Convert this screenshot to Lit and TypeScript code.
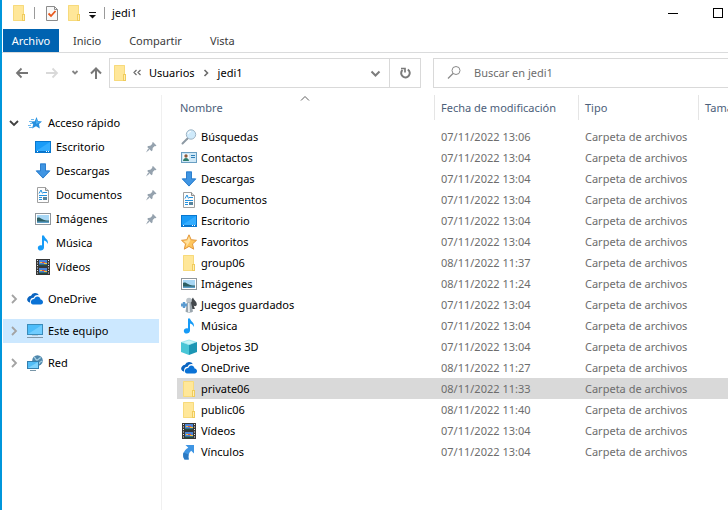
import { LitElement, html, css, svg, TemplateResult, SVGTemplateResult } from "lit";
import { customElement, property, state } from "lit/decorators.js";
import { classMap } from "lit/directives/class-map.js";

const glyphs: Record<string, SVGTemplateResult> = {
  folder: svg`<path d="M2 0h11v16H2z" fill="#ffe799"/><path d="M2.500 0.500h10v9M2.500 0.500v15h9" fill="none" stroke="#f7da7c"/><rect x="11.500" y="9.500" width="2" height="6" fill="#ffeeb5" stroke="#f0cc5c"/>`,
  search: svg`<path d="M1.500 14.500 6.500 9.500" stroke="#8d99a3" stroke-width="2" stroke-linecap="round"/><circle cx="10" cy="5.500" r="4.700" fill="#cfeafb" stroke="#9fb4c4"/><path d="M7 5a3 3 0 0 1 3-2.500" stroke="#fff" fill="none"/>`,
  contacts: svg`<rect x="0.500" y="2.500" width="15" height="10" fill="#cfe8f7" stroke="#6a9fc2"/><rect x="2" y="4" width="6" height="7" fill="#f5fafc"/><circle cx="5" cy="6" r="1.700" fill="#8b5a3c"/><path d="M2 11c0-4 6-4 6 0z" fill="#2f7d6b"/><path d="M10 5.500h4M10 7.500h4" stroke="#2e7fb8"/>`,
  download: svg`<path d="M5 0.500h6v7h4.500L8 15.500 0.500 7.500H5z" fill="#3f95e3"/><path d="M5.500 1h5v7h4L8 15 1.500 8h4z" fill="none" stroke="#2d7fcd"/>`,
  document: svg`<path d="M2.500 0.500h8l3 3v12h-11z" fill="#fdfdfd" stroke="#a0a0a0"/><path d="M10.500 0.500v3h3" fill="#ddd" stroke="#8c8c8c"/><path d="M4 6.500 6 3l1.500 3.500M8 5.500h4M4 8.500h8M4 10.500h3M4 12.500h3" stroke="#2492df" fill="none"/><rect x="8" y="10" width="4" height="3" fill="#57839c"/>`,
  desktop: svg`<rect x="0.500" y="2.500" width="15" height="11" fill="#1a9cf8" stroke="#0877cf"/><path d="M1 12 15 3v9z" fill="#34adff"/><path d="M1 12.500h14" stroke="#0a72c8"/><path d="M2 12.500h1M11 12.500h1M13 12.500h1" stroke="#fff"/>`,
  favorite: svg`<path d="M8 0.800 10.200 5.700 15.500 6.300 11.500 9.900 12.700 15.200 8 12.400 3.300 15.200 4.500 9.900 0.500 6.300 5.800 5.700z" fill="#ffc65c" stroke="#e2973d"/><path d="M8 2.500 9.300 6.400 8 9 5 13l0.700-3.500L2.500 7l3.800-.4z" fill="#ffe1a0"/>`,
  picture: svg`<rect x="0.500" y="2.500" width="15" height="11" fill="#fff" stroke="#8f969c"/><rect x="2" y="4" width="12" height="8" fill="#a8d7f5"/><path d="M2 7c2-1 3 0 5 1s4 1.500 7 1.500V11H2z" fill="#2d5f63"/><path d="M2 10.500h12V12H2z" fill="#5c9fc9"/>`,
  games: svg`<path d="M12 0.500c1 3 4 4 3.800 7-.3 2-2.300 2-3.100 1l1.200 3.500H9.500L10.500 9C8.500 9 7.500 8 8 6z" fill="#42474c"/><circle cx="8" cy="3.500" r="2.800" fill="#bcc4ca"/><path d="M6 5.500h4l2 9c-2 1.600-5.500 1.600-7.500 0z" fill="#9aa5ad"/><path d="M7 6h1.500l.5 9H7z" fill="#e6ebee"/><path d="M0 6.500h1.800V5h2.400v1.500H6v3H4.200V11H1.800V9.500H0z" fill="#5b9bd0"/>`,
  music: svg`<path d="M7 0.500h2c.3 2.700 5 4 3.700 8.500-.5-2-1.700-3-3.700-3.500v7C9 16.500 2.800 16.500 2.800 13c0-2.500 2.500-3.200 4.200-2.500z" fill="#169bf7"/>`,
  cube: svg`<path d="M0 3 8 0.500 16 3 8 6z" fill="#9ee8f0"/><path d="M0 3 8 6v10L0 13z" fill="#49c6d6"/><path d="M8 6 16 3v10L8 16z" fill="#1c96b4"/><path d="M2.500 3.200 8 1.500l5.500 1.700L8 5.200z" fill="#c5f5f8"/>`,
  cloud: svg`<path d="M2.600 11.500A3 3 0 0 1 1 6.500 3.500 3.500 0 0 1 4 4.700 4.500 4.500 0 0 1 12 4.300C9 3.500 7.300 5 6.700 6.700 4 6.500 2.500 9 3.300 11.500z" fill="#0a64c0"/><path d="M6 13.500c-3 0-3-5.500 1.300-5.500C8 4.500 13 4.500 13.600 8.500c3.200.3 3.200 5 0 5z" fill="#0a72d6"/>`,
  video: svg`<rect x="1" y="0" width="14" height="16" fill="#373737"/><path d="M2.500 1v15M13.500 1v15" stroke="#e9e9e9" stroke-dasharray="1 1.500"/><rect x="4" y="1" width="8" height="6" fill="#4d86d8"/><rect x="4" y="9" width="8" height="6" fill="#4d86d8"/><path d="M4 5.500h8V7H4zM4 13.500h8V15H4z" fill="#244f41"/><path d="M7 3h3v1H7zM7 11h3v1H7z" fill="#e34c35"/><path d="M9 4h3v1H9zM5 3h2v1H5zM9 12h3v1H9zM5 11h2v1H5z" fill="#f4c63c"/>`,
  link: svg`<path d="M4.500 1H13v8.500l-2.800-2.800C7.500 9 6.800 12 7.800 15.500H3.500C1 11 2.500 6.500 7.300 3.800z" fill="#3f95e3"/><path d="M2.400 8.500c-.7 2.500-.2 5 1.100 7h4.300c-.6-2-.6-3.500-.1-5z" fill="#2b79c2"/>`,
  quick: svg`<path d="M9.500 2 11 6 15 6.400 12 9 12.800 13.500 9 11.300 5 13.500 6.200 9.300 4 6.600 7.800 6.200z" fill="#258fdf"/><path d="M9.500 3.500 10.500 6.600 13.500 7 9 9z" fill="#55b5f3"/><path d="M4 4.500h3M2 6.500h3M3 8.500h3M1 10.500h3M2 12.500h3" stroke="#6db9ee"/>`,
  computer: svg`<rect x="0.500" y="1.500" width="15" height="10" fill="#4dbdfa" stroke="#3b8cba"/><path d="M1 11 15 2v9z" fill="#71cdff"/><path d="M5 12.500h6" stroke="#b7cbd8"/><path d="M0 14.500h16" stroke="#8298a8"/>`,
  network: svg`<circle cx="10.500" cy="5.500" r="5.300" fill="#4f87ac"/><path d="M7 2c2 1 1 3 3 3s2-3 4-2M12 9c0-2 2-2 3-3" stroke="#a5d0e4" stroke-width="1.300" fill="none"/><rect x="0.500" y="6.500" width="11" height="7" fill="#52bdf7" stroke="#347fae"/><path d="M1 13 11 7v6z" fill="#7ed2fd"/><path d="M3 15.500h6" stroke="#7996a8"/>`,
  pin: svg`<path d="M10 3 13.500 6.500 12.500 7.300 11.800 7 9.700 9 9.500 11.300 8.500 12.300 4.200 8 5.200 7 7.300 6.800 9.400 4.800 9 4zM5.200 9.500 6.500 10.800 3 13.500z" fill="#95a2ae"/>`,
  checklist: svg`<path d="M2.500 1.500h8l3 3v11h-11z" fill="#f8f8f8" stroke="#8c8c8c"/><path d="M10.500 1.500v3h3" fill="none" stroke="#8c8c8c"/><path d="m4.500 8.500 2.500 2.500 4.500-5" fill="none" stroke="#e8571c" stroke-width="1.800"/>`,
  menu: svg`<path d="M5 7.500h7" stroke="#111"/><path d="M5 10h7L8.500 13.500z" fill="#111"/>`,
  back: svg`<path d="M14 8H3M7.500 3.500 3 8l4.500 4.500" fill="none" stroke="#757575" stroke-width="1.800"/>`,
  forward: svg`<path d="M2 8h11M8.500 3.500 13 8l-4.500 4.500" fill="none" stroke="#d9d9d9" stroke-width="1.800"/>`,
  up: svg`<path d="M8 14V3M3 8.500l5-5 5 5" fill="none" stroke="#787878" stroke-width="2"/>`,
  recent: svg`<path d="m5.500 6 2.500 2.500 2.500-2.500" fill="none" stroke="#858585" stroke-width="1.800"/>`,
  down: svg`<path d="m4.500 6.500 4 4 4-4" fill="none" stroke="#7c7c7c" stroke-width="2"/>`,
  expanded: svg`<path d="m4 6 4 4 4-4" fill="none" stroke="#404040" stroke-width="1.800"/>`,
  collapsed: svg`<path d="m6 4 4 4-4 4" fill="none" stroke="#a3a3a3" stroke-width="1.800"/>`,
  crumb: svg`<path d="m6.500 5 3 3-3 3" fill="none" stroke="#6b6b6b" stroke-width="1.600"/>`,
  more: svg`<path d="M7.500 5 5 7.500 7.500 10M11.500 5 9 7.500 11.500 10" fill="none" stroke="#6b6b6b" stroke-width="1.200"/>`,
  refresh: svg`<path d="M10.800 4.500A4.300 4.300 0 1 1 5.500 5" fill="none" stroke="#7a7a7a" stroke-width="2"/><path d="M4 3.500h4v4" fill="none" stroke="#7a7a7a" stroke-width="1.700"/>`,
  lens: svg`<circle cx="10" cy="5.500" r="4" fill="none" stroke="#8a8a8a"/><path d="m7 8.500-5 5" stroke="#8a8a8a" stroke-width="1.200"/>`,
  sort: svg`<path d="m4 6.500 4-4 4 4" fill="none" stroke="#606060"/>`,
  minimize: svg`<path d="M3 8.500h10" stroke="#000"/>`,
  maximize: svg`<rect x="3.500" y="3.500" width="9" height="9" fill="none" stroke="#000"/>`,
};

@customElement("shell-icon")
export class ShellIcon extends LitElement {
  static styles = css`
    :host { display: block; flex: none; width: 16px; height: 16px; }
    .glyph { display: block; width: 16px; height: 16px; }
  `;
  @property() name = "folder";
  render() {
    return html`<svg class="glyph" viewBox="0 0 16 16" aria-hidden="true">${glyphs[this.name]}</svg>`;
  }
}

interface Entry { name: string; icon: string; date: string }
interface Place { name: string; icon: string; open?: boolean; children?: Place[]; pinned?: boolean }

const entries: Entry[] = [
  { name: "Búsquedas", icon: "search", date: "07/11/2022 13:06" },
  { name: "Contactos", icon: "contacts", date: "07/11/2022 13:04" },
  { name: "Descargas", icon: "download", date: "07/11/2022 13:04" },
  { name: "Documentos", icon: "document", date: "07/11/2022 13:04" },
  { name: "Escritorio", icon: "desktop", date: "07/11/2022 13:04" },
  { name: "Favoritos", icon: "favorite", date: "07/11/2022 13:04" },
  { name: "group06", icon: "folder", date: "08/11/2022 11:37" },
  { name: "Imágenes", icon: "picture", date: "08/11/2022 11:24" },
  { name: "Juegos guardados", icon: "games", date: "07/11/2022 13:04" },
  { name: "Música", icon: "music", date: "07/11/2022 13:04" },
  { name: "Objetos 3D", icon: "cube", date: "07/11/2022 13:04" },
  { name: "OneDrive", icon: "cloud", date: "08/11/2022 11:27" },
  { name: "private06", icon: "folder", date: "08/11/2022 11:33" },
  { name: "public06", icon: "folder", date: "08/11/2022 11:40" },
  { name: "Vídeos", icon: "video", date: "07/11/2022 13:04" },
  { name: "Vínculos", icon: "link", date: "07/11/2022 13:04" },
];

const places: Place[] = [
  {
    name: "Acceso rápido", icon: "quick", open: true,
    children: [
      { name: "Escritorio", icon: "desktop", pinned: true },
      { name: "Descargas", icon: "download", pinned: true },
      { name: "Documentos", icon: "document", pinned: true },
      { name: "Imágenes", icon: "picture", pinned: true },
      { name: "Música", icon: "music" },
      { name: "Vídeos", icon: "video" },
    ],
  },
  { name: "OneDrive", icon: "cloud" },
  { name: "Este equipo", icon: "computer" },
  { name: "Red", icon: "network" },
];

@customElement("app-root")
export class AppRoot extends LitElement {
  static styles = css`
    :host {
      display: flex; flex-direction: column; box-sizing: border-box;
      min-height: 100vh; overflow: hidden;
      border-left: 2px solid #0096db; background: #fff; color: #000;
      font: 11px/16px "Noto Sans", "Open Sans", sans-serif;
    }
    * { box-sizing: border-box; }
    button, input { font: inherit; color: inherit; border: 0; padding: 0; margin: 0; background: none; }
    a { color: inherit; text-decoration: none; }
    .titlebar { display: flex; align-items: center; height: 26px; margin-bottom: 3px; padding-left: 9px; }
    .quick { display: flex; align-items: center; gap: 6px; }
    .divider { width: 1px; height: 12px; margin: 0 3px 0 1px; background: #9a9a9a; }
    .customize { margin: 0 -3px 0 -4px; }
    .caption { margin: 0 0 0 4px; font: inherit; }
    .window { display: flex; margin-left: auto; }
    .window button { width: 45px; height: 26px; display: flex; align-items: center; justify-content: center; }
    .window .edge { width: 33px; justify-content: flex-start; padding-left: 15px; }
    .ribbon { display: flex; height: 24px; padding-left: 1px; border-bottom: 1px solid #dadbdc; }
    .tab { padding: 0 14px; color: #3b3b3b; }
    .file { width: 56px; padding: 0; background: #0063b1; color: #fff; }
    .nav { display: flex; align-items: center; height: 40px; }
    .travel { display: flex; align-items: center; gap: 12px; width: 107px; padding-left: 12px; }
    .travel button { display: block; }
    .travel .forward { margin-left: 2px; }
    .travel .recent { margin-left: -5px; margin-right: -7px; }
    .address { display: flex; align-items: center; height: 30px; width: 312px; border: 1px solid #d9d9d9; padding-left: 2px; }
    .crumbs { display: flex; align-items: center; flex: 1; margin: 0; padding: 0 0 0 1px; list-style: none; }
    .crumbs li { display: flex; align-items: center; gap: 3px; }
    .crumbs li + li { margin-left: 4px; }
    .drop { width: 28px; height: 28px; display: grid; place-items: center; }
    .refresh { width: 31px; height: 28px; display: grid; place-items: center; border-left: 1px solid #d9d9d9; }
    .search { display: flex; align-items: center; gap: 12px; flex: 1; min-width: 0; height: 30px; margin-left: 12px; padding-left: 12px; border: 1px solid #d9d9d9; border-right: 0; }
    .search input { flex: 1; min-width: 0; outline: 0; }
    .search input::placeholder { color: #6d6d6d; opacity: 1; }
    .body { display: flex; flex: 1; padding-top: 2px; }
    .side { flex: none; width: 160px; border-right: 1px solid #f0f0f0; padding: 16px 2px 0 1px; }
    .tree, .branch { margin: 0; padding: 0; list-style: none; }
    .tree { display: flex; flex-direction: column; gap: 8px; }
    .place { display: flex; align-items: center; height: 24px; padding-left: 3px; }
    .place a { display: flex; align-items: center; gap: 5px; flex: 1; }
    .toggle { margin-right: 5px; }
    .branch .place { padding-left: 32px; }
    .current { background: #cce8ff; }
    .files { flex: 1; min-width: 0; overflow: hidden; padding-left: 15px; }
    table { width: 100%; table-layout: fixed; border-collapse: separate; border-spacing: 0; text-align: left; }
    th, td { padding: 0 0 0 6px; white-space: nowrap; overflow: hidden; }
    th { height: 25px; font-weight: 400; color: #4c607a; border-left: 1px solid #e5e5e5; }
    td { height: 21px; color: #6d6d6d; border-left: 1px solid transparent; }
    th:first-child, td:first-child { border-left: 0; padding-left: 4px; }
    th:first-child { padding-left: 3px; }
    td:first-child { color: #000; }
    .heading { display: flex; align-items: center; position: relative; }
    .sort { position: absolute; left: 117px; top: -6px; }
    .name-col { width: 257px; }
    .date-col { width: 144px; }
    .type-col { width: 120px; }
    .gap td { height: 6px; }
    .item { display: flex; align-items: center; gap: 4px; }
    .selected { background: #d9d9d9; }
  `;

  @state() private selected = "private06";
  @state() private place = "Este equipo";

  private renderPlace(p: Place, top = true): TemplateResult {
    return html`<li>
      <div class=${classMap({ place: true, current: top && p.name === this.place })}>
        ${top ? html`<button class="toggle" aria-label=${`Expandir ${p.name}`}><shell-icon name=${p.open ? "expanded" : "collapsed"}></shell-icon></button>` : null}
        <a href="#" @click=${() => top && (this.place = p.name)}><shell-icon name=${p.icon}></shell-icon><span>${p.name}</span></a>
        ${p.pinned ? html`<shell-icon name="pin"></shell-icon>` : null}
      </div>
      ${p.children ? html`<ul class="branch">${p.children.map((c) => this.renderPlace(c, false))}</ul>` : null}
    </li>`;
  }

  render() {
    return html`
      <header class="titlebar">
        <div class="quick">
          <shell-icon name="folder"></shell-icon>
          <span class="divider"></span>
          <button aria-label="Propiedades"><shell-icon name="checklist"></shell-icon></button>
          <button aria-label="Nueva carpeta"><shell-icon name="folder"></shell-icon></button>
          <button class="customize" aria-label="Personalizar"><shell-icon name="menu"></shell-icon></button>
          <span class="divider"></span>
        </div>
        <h1 class="caption">jedi1</h1>
        <div class="window">
          <button aria-label="Minimizar"><shell-icon name="minimize"></shell-icon></button>
          <button class="edge" aria-label="Maximizar"><shell-icon name="maximize"></shell-icon></button>
        </div>
      </header>
      <div class="ribbon">
        <button class="tab file">Archivo</button>
        <button class="tab">Inicio</button>
        <button class="tab">Compartir</button>
        <button class="tab">Vista</button>
      </div>
      <div class="nav">
        <div class="travel">
          <button aria-label="Atrás"><shell-icon name="back"></shell-icon></button>
          <button class="forward" aria-label="Adelante"><shell-icon name="forward"></shell-icon></button>
          <button class="recent" aria-label="Ubicaciones recientes"><shell-icon name="recent"></shell-icon></button>
          <button aria-label="Subir"><shell-icon name="up"></shell-icon></button>
        </div>
        <div class="address">
          <shell-icon name="folder"></shell-icon>
          <ul class="crumbs">
            <li><shell-icon name="more"></shell-icon></li>
            <li><button>Usuarios</button><shell-icon name="crumb"></shell-icon></li>
            <li><button>jedi1</button></li>
          </ul>
          <button class="drop" aria-label="Ubicaciones anteriores"><shell-icon name="down"></shell-icon></button>
          <button class="refresh" aria-label="Actualizar"><shell-icon name="refresh"></shell-icon></button>
        </div>
        <label class="search">
          <shell-icon name="lens"></shell-icon>
          <input type="text" placeholder="Buscar en jedi1" aria-label="Buscar en jedi1" />
        </label>
      </div>
      <div class="body">
        <nav class="side"><ul class="tree">${places.map((p) => this.renderPlace(p))}</ul></nav>
        <main class="files">
          <table>
            <colgroup><col class="name-col" /><col class="date-col" /><col class="type-col" /><col /></colgroup>
            <thead>
              <tr>
                <th><div class="heading">Nombre<shell-icon class="sort" name="sort"></shell-icon></div></th>
                <th>Fecha de modificación</th><th>Tipo</th><th>Tamaño</th>
              </tr>
            </thead>
            <tbody>
              <tr class="gap" aria-hidden="true"><td colspan="4"></td></tr>
              ${entries.map((e) => html`
                <tr class=${classMap({ selected: e.name === this.selected })} @click=${() => (this.selected = e.name)}>
                  <td><div class="item"><shell-icon name=${e.icon}></shell-icon><span>${e.name}</span></div></td>
                  <td>${e.date}</td><td>Carpeta de archivos</td><td></td>
                </tr>`)}
            </tbody>
          </table>
        </main>
      </div>
    `;
  }
}
